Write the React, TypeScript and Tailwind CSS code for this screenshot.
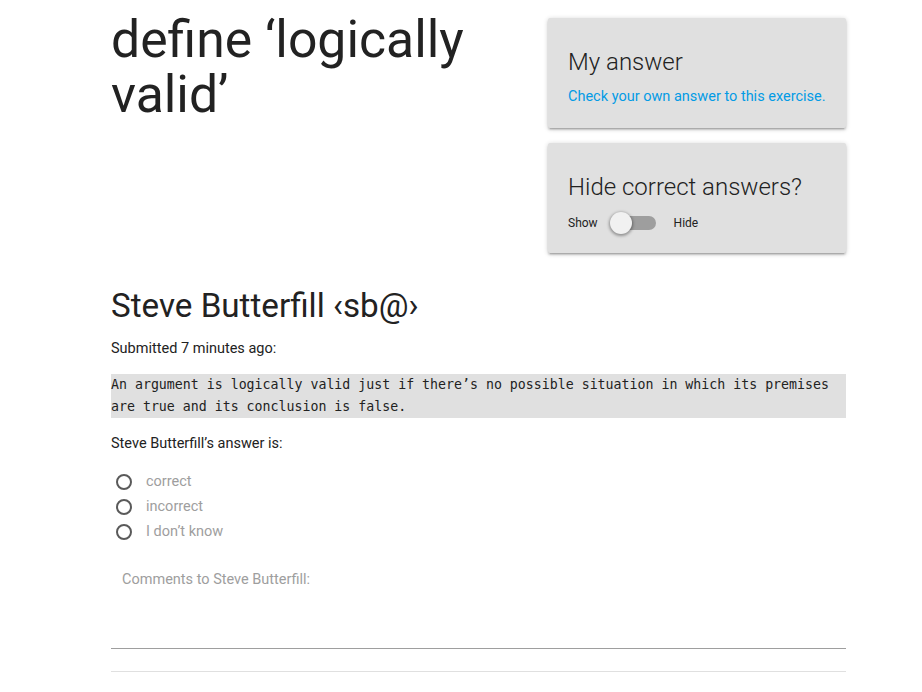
import React, { useState } from 'react';

/* ---------- Small pieces ---------- */
const Card: React.FC<{ children: React.ReactNode }> = ({ children }) => (
  <div className="bg-[#e0e0e0] rounded-[2px] shadow-[0_2px_2px_0_rgba(0,0,0,0.14),0_3px_1px_-2px_rgba(0,0,0,0.12),0_1px_5px_0_rgba(0,0,0,0.2)] px-5 pt-[29px] h-[110px]">
    {children}
  </div>
);

const Radio: React.FC<{ label: string }> = ({ label }) => (
  <label className="flex items-center h-[25px] cursor-pointer">
    <span className="ml-[5px] w-4 h-4 rounded-full border-2 border-[#5a5a5a]" />
    <span className="ml-[14px] text-[#9e9e9e]">{label}</span>
  </label>
);

/* ---------- Page ---------- */
export default function App() {
  const [hide, setHide] = useState(false);

  return (
    <div className="min-h-[692px] bg-white text-[#222] text-[14.5px] font-['Roboto',sans-serif]">
      <div className="w-[735px] ml-[111px]">
        {/* Header row */}
        <div className="flex justify-between">
          <h2 className="w-[400px] text-[51.7px] leading-[55px] font-normal mt-[12px] text-[#222]">
            define ‘logically valid’
          </h2>
          <div className="w-[298px] mt-[18px] flex flex-col gap-[15px]">
            <Card>
              <div className="text-[24px] font-light leading-[30px] text-[#222]">My answer</div>
              <a href="#" className="block mt-[9px] text-[#039be5]">
                Check your own answer to this exercise.
              </a>
            </Card>
            <Card>
              <div className="text-[24px] font-light leading-[30px] text-[#222]">Hide correct answers?</div>
              <div className="flex items-center mt-[10px] text-[12px]">
                <span>Show</span>
                <button
                  onClick={() => setHide(v => !v)}
                  className="relative ml-[12px] w-[46px] h-[22px] flex items-center"
                >
                  <span className={`absolute left-[1px] right-0 h-[14px] rounded-full ${hide ? 'bg-[#80cbc4]' : 'bg-[#9e9e9e]'}`} />
                  <span
                    className={`absolute top-0 w-[22px] h-[22px] rounded-full shadow-[0_1px_3px_1px_rgba(0,0,0,0.35)] ${hide ? 'left-[24px] bg-[#26a69a]' : 'left-0 bg-[#f1f1f1]'}`}
                  />
                </button>
                <span className="ml-[18px]">Hide</span>
              </div>
            </Card>
          </div>
        </div>

        {/* Submission */}
        <h4 className="mt-[35px] text-[33.2px] leading-[36px] font-normal text-[#222]">Steve Butterfill ‹sb@›</h4>
        <p className="mt-[14px] leading-[22px]">Submitted 7 minutes ago:</p>
        <pre className="mt-[14px] bg-[#e0e0e0] text-[13.25px] leading-[22px] font-['DejaVu_Sans_Mono',monospace] whitespace-pre-wrap text-[#222]">
          An argument is logically valid just if there’s no possible situation in which its premises are true and its conclusion is false.
        </pre>
        <p className="mt-[15px] leading-[22px]">Steve Butterfill’s answer is:</p>

        <div className="mt-[14px]">
          <Radio label="correct" />
          <Radio label="incorrect" />
          <Radio label="I don’t know" />
        </div>

        {/* Comments */}
        <div className="mt-[26px]">
          <label className="block ml-[11px] text-[#9e9e9e] text-[14.5px] leading-[20px]">
            Comments to Steve Butterfill:
          </label>
          <div className="h-[59px] border-b border-[#9e9e9e]" />
          <div className="h-[23px] border-b border-[#e0e0e0]" />
        </div>
      </div>
    </div>
  );
}
